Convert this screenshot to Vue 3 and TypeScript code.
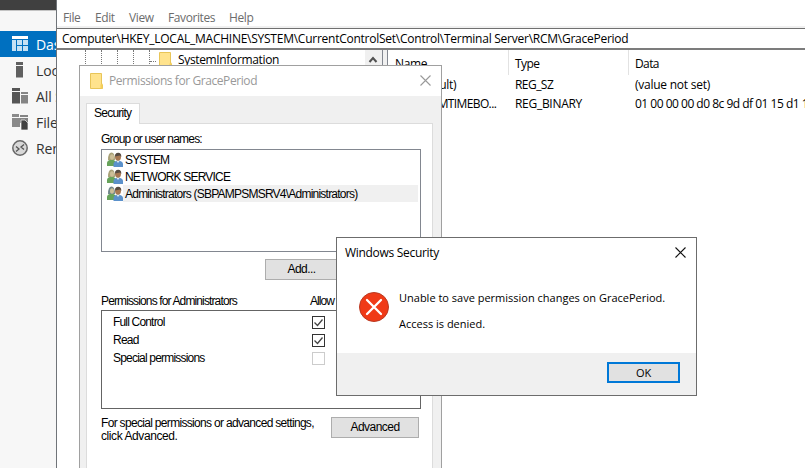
<script setup lang="ts">
interface NavItem { label: string; icon: string; active?: boolean }
interface Principal { name: string; cls: string; left: string; selected?: boolean }
interface Permission { name: string; cls: string; allow: boolean; enabled: boolean }

const nav: NavItem[] = [
  { label: 'Dashboard', icon: 'dash', active: true },
  { label: 'Local Server', icon: 'local' },
  { label: 'All Servers', icon: 'all' },
  { label: 'File and Storage', icon: 'file' },
  { label: 'Remote Desktop', icon: 'remote' },
]
const menu = ['File', 'Edit', 'View', 'Favorites', 'Help']
const principals: Principal[] = [
  { name: 'SYSTEM', cls: 'p-sys', left: '#a9a178' },
  { name: 'NETWORK SERVICE', cls: 'p-net', left: '#a9a178' },
  { name: 'Administrators (SBPAMPSMSRV4\\Administrators)', cls: 'p-adm', left: '#71868a', selected: true },
]
const permissions: Permission[] = [
  { name: 'Full Control', cls: 'q-full', allow: true, enabled: true },
  { name: 'Read', cls: 'q-read', allow: true, enabled: true },
  { name: 'Special permissions', cls: 'q-spec', allow: false, enabled: false },
]
</script>

<template>
  <div class="desktop">
    <aside class="manager">
      <div class="manager-top"></div>
      <nav class="nav">
        <div v-for="n in nav" :key="n.label" class="nav-item" :class="{ active: n.active }">
          <svg class="nav-icon" viewBox="0 0 16 16">
            <g v-if="n.icon === 'dash'" fill="#c5e1f4">
              <rect x="0" y="0" width="16" height="3" fill="#fff" /><rect x="0" y="4" width="4" height="11" />
              <rect x="5" y="4" width="5" height="5" /><rect x="11" y="4" width="5" height="5" />
              <rect x="5" y="10" width="5" height="5" /><rect x="11" y="10" width="5" height="5" />
            </g>
            <g v-else-if="n.icon === 'local'" fill="#606060">
              <rect x="4" y="0" width="7" height="3" /><rect x="4" y="4" width="7" height="11.5" />
            </g>
            <g v-else-if="n.icon === 'all'">
              <path d="M0 0h8v3H0zM0 4h8v11.500H0z" fill="#565656" /><path d="M9 4h7v2H9zM9 7h7v8.500H9z" fill="#858585" />
            </g>
            <g v-else-if="n.icon === 'file'">
              <path d="M0 0h7v3H0zM0 4h8v9H0z" fill="#8a8a8a" /><path d="M8 1h8v2H8zM8 4h8v5H8z" fill="#858585" />
              <path d="M9 6h4l3 3v7H9z" fill="#404040" stroke="#f7f7f7" stroke-width=".7" />
            </g>
            <g v-else fill="none">
              <circle cx="8" cy="8" r="7.200" fill="#d8d8d8" stroke="#686868" stroke-width="1.500" />
              <path d="M4 6.500l3 2.500-3 2.500M12 4.500L9 7l3 2.500" stroke="#555" stroke-width="1.300" />
            </g>
          </svg>
          <span>{{ n.label }}</span>
        </div>
      </nav>
    </aside>

    <main class="regedit">
      <div class="menu"><span v-for="m in menu" :key="m" :class="'m-' + m.toLowerCase()">{{ m }}</span></div>
      <div class="address"><span>Computer\HKEY_LOCAL_MACHINE\SYSTEM\CurrentControlSet\Control\Terminal Server\RCM\GracePeriod</span></div>
      <div class="panes">
        <div class="tree">
          <i v-for="i in 5" :key="i" class="guide"></i>
          <i class="branch"></i>
          <svg class="folder tree-folder" viewBox="0 0 13 16"><path d="M.5.5h11v10.500l1 1v3.500H.500z" fill="#ffe38d" stroke="#e8c558" /><path d="M10.500 15.500v-4l2-1v5z" fill="#f5cf5a" /></svg>
          <span class="tree-label">SystemInformation</span>
        </div>
        <div class="scroll"><svg viewBox="0 0 16 15"><path d="M4.500 10L8 6l3.500 4" fill="none" stroke="#505050" stroke-width="2" /></svg></div>
        <div class="splitter"></div>
        <div class="list">
          <div class="row head"><span class="c1">Name</span><span class="c2 t-type">Type</span><span class="c3 t-type">Data</span></div>
          <div class="row"><span class="c1 value">(Default)</span><span class="c2 t-sz">REG_SZ</span><span class="c3 t-set">(value not set)</span></div>
          <div class="row"><span class="c1 value t-time">L$RTMTIMEBO...</span><span class="c2">REG_BINARY</span><span class="c3 t-hex">01 00 00 00 d0 8c 9d df 01 15 d1 11</span></div>
        </div>
      </div>
    </main>

    <section class="perm">
      <header class="perm-title">
        <svg class="folder" viewBox="0 0 13 16"><path d="M.5.5h11v10.500l1 1v3.500H.500z" fill="#ffe38d" stroke="#e8c558" /><path d="M10.500 15.500v-4l2-1v5z" fill="#f5cf5a" /></svg>
        <span>Permissions for GracePeriod</span>
        <svg class="close" viewBox="0 0 11 11"><path d="M.5.5l10 10M10.500.5l-10 10" stroke="#999" stroke-width="1.100" /></svg>
      </header>
      <div class="tab"><span>Security</span></div>
      <div class="sheet">
        <div class="group-label">Group or user names:</div>
        <div class="principals">
          <div v-for="p in principals" :key="p.name" class="principal">
            <svg class="people" viewBox="0 0 16 15">
              <path d="M0 14V11q0-3 4.500-3.500Q9 8 9 11v3z" fill="#67a35b" />
              <path d="M1 8Q1 .5 4.500.5T8 8z" :fill="p.left" /><ellipse cx="5" cy="5" rx="2" ry="2.800" fill="#cdbf98" />
              <path d="M6.500 15v-3q0-3 4.500-3.500 5 .5 5 3.500v3z" fill="#5b91cb" />
              <ellipse cx="11" cy="5" rx="3" ry="3.700" fill="#a77852" /><path d="M8 4.500Q8 .8 11.200.8T14.300 5L13 3.500z" fill="#554b42" />
              <path d="M9.500 9l1.500 2 1.500-2z" fill="#dcecf5" />
            </svg>
            <span class="principal-name" :class="[p.cls, { selected: p.selected }]">{{ p.name }}</span>
          </div>
        </div>
        <div class="add-row"><button class="btn add">Add...</button></div>
        <div class="perm-head"><span class="for">Permissions for Administrators</span><span class="allow">Allow</span></div>
        <div class="permissions">
          <div v-for="q in permissions" :key="q.name" class="permission">
            <span :class="q.cls">{{ q.name }}</span>
            <svg class="check" viewBox="0 0 13 13">
              <rect x=".5" y=".5" width="12" height="12" fill="#fff" :stroke="q.enabled ? '#333' : '#ccc'" />
              <path v-if="q.allow" d="M2.500 6.500l3 3 5-6" fill="none" stroke="#444" stroke-width="1.300" />
            </svg>
          </div>
        </div>
        <div class="advanced-row">
          <p><span class="a1">For special permissions or advanced settings,</span><br><span class="a2">click Advanced.</span></p>
          <button class="btn adv">Advanced</button>
        </div>
      </div>
    </section>

    <section class="alert">
      <header class="alert-title">
        <span>Windows Security</span>
        <svg class="close" viewBox="0 0 11 11"><path d="M.5.5l10 10M10.500.5l-10 10" stroke="#111" stroke-width="1.100" /></svg>
      </header>
      <div class="alert-body">
        <svg class="error" viewBox="0 0 30 30"><circle cx="15" cy="15" r="14.500" fill="#f03a17" stroke="#b93a22" /><path d="M8 8l14 14M22 8L8 22" stroke="#fff" stroke-width="2.300" stroke-linecap="round" /></svg>
        <div class="message"><div>Unable to save permission changes on GracePeriod.</div><div>Access is denied.</div></div>
      </div>
      <footer class="alert-foot"><button class="ok">OK</button></footer>
    </section>
  </div>
</template>

<style>
body { margin: 0; overflow: hidden; }
</style>

<style scoped>
* { box-sizing: border-box; }
.desktop { position: relative; display: flex; width: 805px; height: 468px; overflow: hidden; background: #fff; font: 12px/16px "Open Sans", sans-serif; color: #000; white-space: nowrap; }
svg { display: block; flex: none; }
button { font: inherit; color: inherit; padding: 0; border-radius: 0; }

.manager { width: 56px; flex: none; overflow: hidden; background: #f7f7f7; }
.manager-top { height: 11px; background: #404040; border-bottom: 1px solid #c4c4c4; }
.nav { padding-top: 20px; }
.nav-item { height: 26px; display: flex; align-items: center; gap: 8px; padding-left: 12px; font-size: 14px; line-height: 26px; letter-spacing: -.1px; color: #333; }
.nav-item span { padding-top: 1px; }
.nav-item.active { background: #0070c0; color: #fff; }
.nav-icon { width: 16px; height: 16px; }

.regedit { flex: 1; min-width: 0; display: flex; flex-direction: column; border-left: 1px solid #707479; }
.menu { height: 28px; display: flex; padding: 10px 0 0 6px; color: #6c6c6c; letter-spacing: -.4px; border-bottom: 2px solid #f0f0f0; }
.menu span { flex: none; }
.m-file { width: 32px; } .m-edit { width: 34px; } .m-view { width: 39px; } .m-favorites { width: 61px; }
.address { height: 22px; padding: 2px 0 0 5px; border-top: 1px solid #707070; border-bottom: 2px solid #7c7c7c; letter-spacing: -.25px; }
.panes { flex: 1; display: flex; }
.tree { width: 308px; height: 18px; display: flex; overflow: hidden; padding-left: 28px; }
.guide { width: 16px; flex: none; border-left: 1px dotted #777; }
.guide:nth-child(5) { width: 1px; }
.branch { width: 6px; height: 12px; flex: none; border-bottom: 1px dotted #777; }
.folder { width: 13px; height: 16px; }
.tree-folder { margin: 2px 6px 0 3px; }
.tree-label { padding-top: 2px; letter-spacing: -.35px; }
.scroll { width: 17px; background: #f0f0f0; }
.scroll svg { width: 16px; height: 17px; margin-top: 1px; }
.splitter { width: 6px; border-left: 1px solid #828790; border-right: 1px solid #828790; background: #f0f0f0; }
.list { flex: 1; min-width: 0; overflow: hidden; }
.row { display: flex; height: 19px; line-height: 19px; letter-spacing: -.29px; }
.row.head { height: 25px; line-height: 27px; letter-spacing: -.39px; }
.row span { flex: none; }
.c1 { width: 121px; padding-left: 7px; }
.c2 { width: 120px; padding-left: 6px; }
.c3 { padding-left: 6px; }
.head .c1, .head .c2 { border-right: 1px solid #e2e2e2; }
.c1.value { padding-left: 23px; }
.row .t-type { letter-spacing: -.6px; }
.row .t-sz { letter-spacing: -.55px; }
.row .t-set { letter-spacing: -.25px; }
.row .t-hex { letter-spacing: -.5px; }
.row .t-time { padding-left: 25px; letter-spacing: -.62px; }

.perm { position: absolute; left: 79px; top: 65px; width: 363px; height: 410px; border: 1px solid #a0a0a0; background: #f0f0f0; font: 12px/13px "Liberation Sans", sans-serif; letter-spacing: -.8px; }
.perm-title { height: 30px; display: flex; align-items: center; padding: 0 10px; background: #fff; color: #999; font: 12px/16px "Open Sans", sans-serif; letter-spacing: -.42px; }
.perm-title span { flex: 1; padding-left: 6px; }
.close { width: 11px; height: 11px; }
.perm-title .close { margin-bottom: 2px; }
.tab { position: relative; width: 54px; height: 21px; margin: 7px 0 -1px 6px; padding: 3px 0 0 7px; background: #fff; border: 1px solid #dcdcdc; border-bottom: 0; z-index: 1; letter-spacing: -.75px; }
.sheet { width: 347px; height: 350px; margin-left: 6px; padding: 8px 10px 0 14px; border: 1px solid #dcdcdc; background: #fff; }
.group-label { height: 17px; line-height: 14px; letter-spacing: -.79px; }
.principals { width: 320px; height: 103px; padding: 1px 2px 0 5px; border: 1px solid #828790; }
.principal { display: flex; height: 17px; align-items: center; }
.people { width: 16px; height: 15px; }
.principal-name { flex: 1; height: 17px; line-height: 18px; padding-left: 2px; }
.selected { background: #f0f0f0; }
.p-sys { letter-spacing: -.85px; } .p-net { letter-spacing: -.8px; } .p-adm { letter-spacing: -.77px; }
.add-row { padding: 7px 0 0 164px; }
.btn { display: block; height: 21px; background: #e1e1e1; border: 1px solid #adadad; letter-spacing: -.53px; }
.add { width: 73px; }
.perm-head { display: flex; height: 30px; padding-top: 13px; line-height: 16px; }
.for { width: 209px; letter-spacing: -.87px; }
.allow { letter-spacing: -.94px; }
.permissions { width: 320px; height: 99px; padding: 2px 0 0 11px; border: 1px solid #646464; }
.permission { height: 18px; display: flex; align-items: center; }
.permission span { width: 199px; line-height: 18px; }
.q-full { letter-spacing: -.82px; } .q-read { letter-spacing: -.75px; } .q-spec { letter-spacing: -.8px; }
.check { width: 13px; height: 13px; }
.advanced-row { display: flex; padding-top: 8px; }
.advanced-row p { width: 230px; margin: 0; }
.a1 { letter-spacing: -.68px; } .a2 { letter-spacing: -.42px; }
.adv { width: 88px; }

.alert { position: absolute; left: 336px; top: 237px; width: 361px; height: 159px; display: flex; flex-direction: column; border: 1px solid #6c6c6c; background: #fff; z-index: 2; }
.alert-title { height: 30px; display: flex; align-items: center; justify-content: space-between; padding: 0 10px 0 8px; letter-spacing: -.3px; }
.alert-title .close { margin-bottom: 1px; }
.alert-body { flex: 1; display: flex; padding: 24px 0 0 22px; }
.error { width: 30px; height: 30px; }
.message { margin: -2px 0 0 10px; font-size: 11px; line-height: 16px; }
.message div + div { margin-top: 10px; }
.alert-foot { height: 42px; display: flex; justify-content: flex-end; padding: 9px 16px 0 0; background: #f0f0f0; }
.ok { width: 73px; height: 21px; border: 2px solid #0078d7; background: #e1e1e1; font-size: 11px; line-height: 16px; letter-spacing: -.2px; }
</style>
